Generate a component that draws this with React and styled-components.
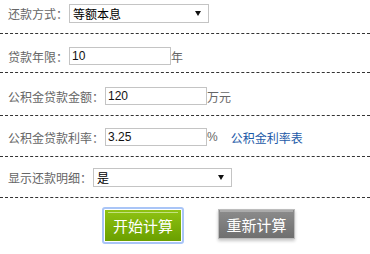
import React from "react";
import styled, { createGlobalStyle } from "styled-components";

const Global = createGlobalStyle`
  html, body { margin: 0; padding: 0; background: #fff; }
  body { font-family: "Liberation Sans", "Noto Sans CJK SC", sans-serif; font-size: 12px; color: #666; }
  * { box-sizing: border-box; }
`;

const Form = styled.div`
  width: 370px;
`;

const Row = styled.div`
  display: flex;
  align-items: center;
  padding: ${(p) => p.$pt}px 0 ${(p) => p.$pb}px 8px;
  border-bottom: 1px dashed #333;
`;

const Label = styled.span`
  font-family: "Noto Sans CJK SC", sans-serif;
  font-size: 12px;
  color: #666;
  margin-right: 1px;
  white-space: nowrap;
`;

const Unit = styled.span`
  font-family: "Noto Sans CJK SC", "Liberation Sans", sans-serif;
  font-size: 12px;
  color: #666;
`;

const Percent = styled.span`
  font-family: "Liberation Sans", sans-serif;
  font-size: 12px;
  color: #666;
  margin-right: 13px;
`;

const Link = styled.a`
  font-family: "Noto Sans CJK SC", sans-serif;
  font-size: 12px;
  color: #1c5aa8;
  text-decoration: none;
  cursor: pointer;
`;

const TextInput = styled.input`
  width: 102px;
  height: 18px;
  border: 1px solid #c4c4c4;
  padding: 0 2px;
  margin: 0;
  font-family: "Liberation Sans", sans-serif;
  font-size: 12px;
  color: #111;
  outline: none;
  background: #fff;
`;

const SelectWrap = styled.div`
  position: relative;
  width: ${(p) => p.$w}px;
  height: 19px;
`;

const NativeSelect = styled.select`
  appearance: none;
  -webkit-appearance: none;
  width: 100%;
  height: 100%;
  margin: 0;
  border: 1px solid #c4c4c4;
  border-radius: 0;
  background: #fff;
  padding: 0 0 0 3px;
  font-family: "Noto Sans CJK SC", sans-serif;
  font-size: 12px;
  color: #000;
  outline: none;
`;

const Arrow = styled.svg`
  position: absolute;
  right: 8px;
  top: 7px;
  pointer-events: none;
`;

const ButtonBar = styled.div`
  display: flex;
  align-items: flex-start;
  padding: 9px 0 0 102px;
  gap: 34px;
`;

const PrimaryButton = styled.button`
  width: 82px;
  height: 37px;
  padding: 1px;
  margin: 0;
  border: 2px solid #a9c5f7;
  border-radius: 3px;
  background: #fff;
  cursor: pointer;
`;

const PrimaryFace = styled.span`
  position: relative;
  display: flex;
  align-items: center;
  justify-content: center;
  width: 100%;
  height: 100%;
  background: linear-gradient(#8fc312, #6a9f00);
  color: #fff;
  font-family: "Noto Sans CJK SC", sans-serif;
  font-size: 15px;
  &::before {
    content: "";
    position: absolute;
    left: 3px;
    right: 3px;
    top: 2px;
    height: 1px;
    background: #c3e27f;
  }
`;

const SecondaryButton = styled.button`
  position: relative;
  width: 77px;
  height: 30px;
  margin: 2px 0 0 0;
  padding: 0;
  border: 1px solid #bdbdbd;
  background: linear-gradient(#8c8c8c, #6f6f6f);
  box-shadow: 0 2px 3px rgba(0, 0, 0, 0.22);
  color: #fff;
  font-family: "Noto Sans CJK SC", sans-serif;
  font-size: 15px;
  cursor: pointer;
  &::before {
    content: "";
    position: absolute;
    left: 1px;
    right: 1px;
    top: 0;
    height: 2px;
    background: #ababab;
  }
`;

const DownArrow = () => (
  <Arrow width="6" height="5" viewBox="0 0 6 5">
    <path d="M0 0 H6 L3 5 Z" fill="#111" />
  </Arrow>
);

export default function App() {
  return (
    <>
      <Global />
      <Form>
        <Row $pt={4} $pb={10}>
          <Label>还款方式：</Label>
          <SelectWrap $w={140}>
            <NativeSelect defaultValue="等额本息">
              <option>等额本息</option>
              <option>等额本金</option>
            </NativeSelect>
            <DownArrow />
          </SelectWrap>
        </Row>
        <Row $pt={13} $pb={7}>
          <Label>贷款年限：</Label>
          <TextInput defaultValue="10" />
          <Unit>年</Unit>
        </Row>
        <Row $pt={14} $pb={10}>
          <Label>公积金贷款金额：</Label>
          <TextInput defaultValue="120" />
          <Unit>万元</Unit>
        </Row>
        <Row $pt={12} $pb={10}>
          <Label>公积金贷款利率：</Label>
          <TextInput defaultValue="3.25" />
          <Percent>%</Percent>
          <Link>公积金利率表</Link>
        </Row>
        <Row $pt={11} $pb={10}>
          <Label>显示还款明细：</Label>
          <SelectWrap $w={139}>
            <NativeSelect defaultValue="是">
              <option>是</option>
              <option>否</option>
            </NativeSelect>
            <DownArrow />
          </SelectWrap>
        </Row>
        <ButtonBar>
          <PrimaryButton>
            <PrimaryFace>开始计算</PrimaryFace>
          </PrimaryButton>
          <SecondaryButton>重新计算</SecondaryButton>
        </ButtonBar>
      </Form>
    </>
  );
}
